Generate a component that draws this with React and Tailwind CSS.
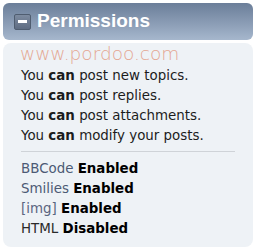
const perms = ["post new topics.", "post replies.", "post attachments.", "modify your posts."];

const codes = [
  { label: "BBCode", value: "Enabled", color: "text-[#4c5a75]" },
  { label: "Smilies", value: "Enabled", color: "text-[#4c5a75]" },
  { label: "[img]", value: "Enabled", color: "text-[#5a6580]" },
  { label: "HTML", value: "Disabled", color: "text-[#2a2a2a]" },
];

const App = () => {
  return (
    <div className="w-[256px] h-[250px] bg-white p-[3px] flex flex-col gap-[3px]">
      <div className="h-[37px] rounded-[6px] bg-gradient-to-b from-[#6b7e99] to-[#a6b7cd] flex items-center gap-[6px] px-[11px]">
        <div className="w-[17px] h-[16px] rounded-[2px] border border-[#4f5d70] bg-gradient-to-b from-[#7d8ba0] to-[#5e6c82] flex items-center justify-center">
          <div className="w-[9px] h-[3px] bg-white" />
        </div>
        <span className="text-white font-bold text-[19px] font-['Liberation_Sans',sans-serif]">
          Permissions
        </span>
      </div>
      <div className="flex-1 rounded-[8px] bg-[#eef2f6] pl-[18px] pr-[17px] font-['DejaVu_Sans',sans-serif] text-[13.4px] text-[#1c1c1c]">
        <div className="h-[21px] flex items-center -ml-[1px] text-[#e4a692] text-[18.5px] font-extralight font-['DejaVu_Sans',sans-serif]">
          www.pordoo.com
        </div>
        <div className="flex flex-col pt-[2px] pb-[5px]">
          {perms.map((p) => (
            <div key={p} className="h-[20px] leading-[20px]">
              You <b>can</b> {p}
            </div>
          ))}
        </div>
        <div className="h-px bg-[#cfd3d8] mr-[1px]" />
        <div className="flex flex-col pt-[7px]">
          {codes.map((c) => (
            <div key={c.label} className="h-[20px] leading-[20px]">
              <span className={c.color}>{c.label}</span> <b className="text-black">{c.value}</b>
            </div>
          ))}
        </div>
      </div>
    </div>
  );
};

export default App;
